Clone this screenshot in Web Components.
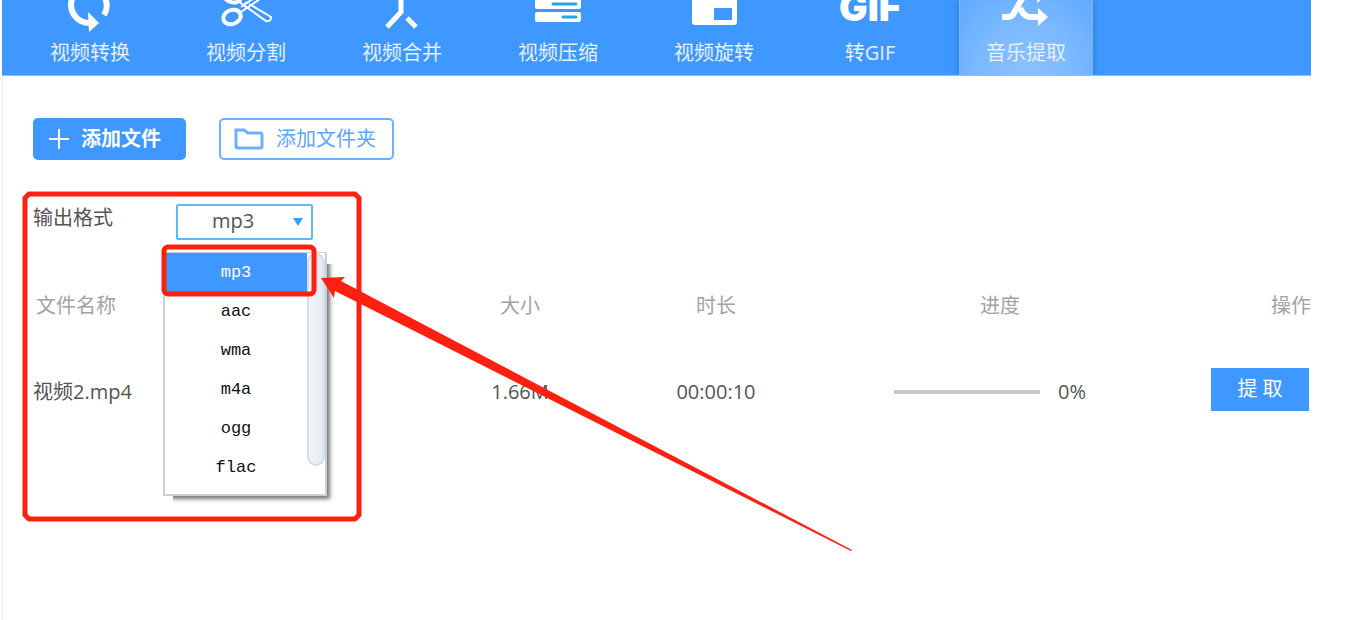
<!DOCTYPE html>
<html lang="zh-CN">
<head>
<meta charset="utf-8">
<meta name="viewport" content="width=device-width, initial-scale=1">
<title>音乐提取</title>
<style>
  body { margin: 0; background: #fff; }
</style>
</head>
<body>
<converter-app></converter-app>

<template id="converter-app">
  <style>
    :host {
      --blue: #3e98ff; --line-blue: #62b9f2; --text: #555; --muted: #a3a3a3; --mark: #ff2012;
      display: block; position: relative; box-sizing: border-box; min-height: 100vh;
      padding: 0 45px 0 2px; overflow: hidden; color: var(--text);
      font: 20px/28px "Open Sans", "Noto Sans CJK SC", sans-serif;
    }
    main {
      box-sizing: border-box; min-height: calc(100vh - 76px);
      padding: 42px 0 0 30px; border-left: 1px solid #ececec;
    }
    .actions { display: flex; gap: 33px; margin-bottom: 44px; }
    file-table { margin-top: 46px; }
  </style>
  <tool-bar>
    <tool-tab>
      <svg slot="icon" viewBox="0 0 64 32" fill="none" stroke="#fff" stroke-width="6">
        <path d="M15-3A18 18 0 0 0 31 23M47-2A18 18 0 0 1 46 15"/>
        <path d="M30 12L41 23L31 32Z" fill="#fff" stroke="none"/>
      </svg>视频转换</tool-tab>
    <tool-tab>
      <svg slot="icon" viewBox="0 0 64 32" fill="none" stroke="#fff">
        <ellipse cx="18" cy="17" rx="9" ry="7" stroke-width="4" transform="rotate(-22 18 17)"/>
        <ellipse cx="18" cy="-4" rx="9" ry="6" stroke-width="4" transform="rotate(22 18 -4)"/>
        <path d="M24 1L52 21Q57 22 57 17L37 5M27 12L46-1M27 7L40-2" stroke-width="2"/>
        <circle cx="33" cy="5" r="3" stroke-width="1"/>
      </svg>视频分割</tool-tab>
    <tool-tab>
      <svg slot="icon" viewBox="0 0 64 32" fill="none" stroke="#fff" stroke-width="5">
        <path d="M31-6V12L17 27M37 18L46 27"/>
      </svg>视频合并</tool-tab>
    <tool-tab>
      <svg slot="icon" viewBox="0 0 64 32" fill="#fff">
        <rect x="9" y="-2" width="46" height="11" rx="2"/><rect x="9" y="12" width="46" height="10" rx="2"/>
        <path d="M27 4H50M37 17H50" stroke="#28a4ec" stroke-width="3" stroke-linecap="round"/>
      </svg>视频压缩</tool-tab>
    <tool-tab>
      <svg slot="icon" viewBox="0 0 64 32" fill="#fff" fill-rule="evenodd">
        <path d="M10-10H55V22Q55 25 52 25H13Q10 25 10 22ZM32 8V20H50V8Z"/>
      </svg>视频旋转</tool-tab>
    <tool-tab>
      <svg slot="icon" viewBox="0 0 64 32" fill="#fff">
        <text x="32" y="21" text-anchor="middle" font-family="Inter, sans-serif" font-weight="900" font-size="38">GIF</text>
      </svg>转GIF</tool-tab>
    <tool-tab active>
      <svg slot="icon" viewBox="0 0 64 32" fill="none" stroke="#fff" stroke-width="6">
        <path d="M8 17H14Q18 17 20 13L29-3M26 8Q30 17 36 17H45"/>
        <path d="M44 8L54 17L44 26ZM43-8V3L51-4Z" fill="#fff" stroke="none"/>
      </svg>音乐提取</tool-tab>
  </tool-bar>
  <main>
    <div class="actions">
      <action-button primary>
        <svg slot="icon" width="20" height="20" viewBox="0 0 20 20" stroke="#fff" stroke-width="2"><path d="M10 0V20M0 10H20"/></svg>添加文件</action-button>
      <action-button>
        <svg slot="icon" width="30" height="22" viewBox="0 0 30 22" fill="none" stroke="#6cb0ff" stroke-width="3"><path d="M3 2H10L14 5H26Q28 5 28 7V18Q28 20 26 20H4Q2 20 2 18V2Z"/></svg>添加文件夹</action-button>
    </div>
    <format-picker></format-picker>
    <file-table></file-table>
  </main>
  <red-marks></red-marks>
</template>

<template id="tool-bar">
  <style>
    :host { display: block; }
    nav {
      display: flex; gap: 22px; box-sizing: border-box; height: 76px; padding-left: 21px;
      background: var(--blue); border-bottom: 1px solid #8bc0ff; overflow: hidden;
    }
  </style>
  <nav><slot></slot></nav>
</template>

<template id="tool-tab">
  <style>
    :host { display: block; flex: 0 0 134px; }
    button {
      display: flex; flex-direction: column; align-items: center; gap: 7px; width: 100%; height: 76px;
      padding: 0; border: 0; background: none; color: #e4f0ff; font: inherit; cursor: pointer;
    }
    :host([active]) button {
      background: radial-gradient(ellipse at 50% 100%, #8bc1ff 0%, #7ab8ff 55%, #58a6ff 110%);
      box-shadow: 0 0 8px #2878cf, inset 1px 0 #78b6ff, inset -1px 0 #78b6ff;
    }
    ::slotted(svg) { display: block; width: 64px; height: 32px; }
  </style>
  <button type="button"><slot name="icon"></slot><span><slot></slot></span></button>
</template>

<template id="action-button">
  <style>
    :host { display: block; }
    button {
      display: flex; align-items: center; gap: 12px; box-sizing: border-box; height: 42px; padding: 0 16px 0 13px;
      border: 2px solid #6cb0ff; border-radius: 5px; background: #fff; color: #5ba7ff; font: inherit; cursor: pointer;
    }
    :host([primary]) button { width: 153px; padding: 0 14px; border-color: var(--blue); background: var(--blue); color: #fff; font-weight: 700; }
    ::slotted(svg) { flex: none; }
  </style>
  <button type="button"><slot name="icon"></slot><span><slot></slot></span></button>
</template>

<template id="format-picker">
  <style>
    :host { display: flex; align-items: flex-start; }
    label { width: 143px; }
    .box { position: relative; width: 137px; }
    select {
      appearance: none; display: block; box-sizing: border-box; width: 100%; height: 36px; padding: 0 34px 2px;
      border: 2px solid var(--line-blue); border-radius: 2px; background: #fff; color: var(--text); font: inherit;
    }
    .arrow { position: absolute; right: 10px; top: 14px; pointer-events: none; }
    .menu {
      position: absolute; z-index: 1; right: -14px; top: 48px; display: flex; box-sizing: border-box; width: 164px; height: 244px;
      border: 2px solid #cbcfda; border-top-width: 1px; background: #fff; box-shadow: 4px 4px 4px -1px #777;
      clip-path: polygon(0 0, 100% 0, 100% 12px, 200% 12px, 200% 200%, 10px 200%, 10px 100%, 0 100%);
    }
    ul { flex: 1; margin: 0; padding: 0; list-style: none; font: 17px/39px "Liberation Mono", monospace; color: #111; text-align: center; }
    [aria-selected=true] { background: var(--blue); color: #fff; }
    .bar { box-sizing: border-box; width: 18px; height: 213px; border: 2px solid #d5dde5; border-radius: 9px; background: linear-gradient(90deg, #f2f5f8, #e3eaf0); }
  </style>
  <label for="format">输出格式</label>
  <div class="box">
    <select id="format"><option>mp3</option><option>aac</option><option>wma</option><option>m4a</option><option>ogg</option><option>flac</option></select>
    <svg class="arrow" width="10" height="8" viewBox="0 0 10 8" fill="#2ba4ea"><path d="M0 0H10L5 8Z"/></svg>
    <div class="menu">
      <ul role="listbox" aria-label="输出格式">
        <li role="option" aria-selected="true">mp3</li>
        <li role="option">aac</li>
        <li role="option">wma</li>
        <li role="option">m4a</li>
        <li role="option">ogg</li>
        <li role="option">flac</li>
      </ul>
      <div class="bar"></div>
    </div>
  </div>
</template>

<template id="file-table">
  <style>
    :host { display: block; }
    table { width: 100%; table-layout: fixed; border-collapse: collapse; }
    th, td { padding: 0; font-weight: 400; text-align: center; }
    th { height: 40px; color: var(--muted); }
    td { height: 126px; box-sizing: border-box; }
    td:not(:last-child) { padding-top: 6px; }
    th:first-child, td:first-child { text-align: left; }
    th:first-child { padding-left: 3px; }
    th:last-child, td:last-child { text-align: right; }
    .size, .time { width: 196px; }
    .state { width: 372px; }
    .act { width: 125px; }
    .progress { display: flex; align-items: center; justify-content: center; gap: 18px; padding-right: 20px; }
    progress { appearance: none; width: 146px; height: 4px; border: 0; background: #c9c9c9; }
    progress::-webkit-progress-bar { background: #c9c9c9; }
    progress::-webkit-progress-value { background: var(--blue); }
    button { width: 98px; height: 43px; margin-right: 2px; padding: 0; border: 0; background: var(--blue); color: #fff; font: inherit; vertical-align: middle; white-space: pre; }
  </style>
  <table>
    <colgroup><col><col class="size"><col class="time"><col class="state"><col class="act"></colgroup>
    <thead><tr><th scope="col">文件名称</th><th scope="col">大小</th><th scope="col">时长</th><th scope="col">进度</th><th scope="col">操作</th></tr></thead>
    <tbody><tr>
      <td>视频2.mp4</td><td>1.66M</td><td>00:00:10</td>
      <td><div class="progress"><progress max="100" value="0" aria-label="进度"></progress><span>0%</span></div></td>
      <td><button type="button">提 取</button></td>
    </tr></tbody>
  </table>
</template>

<template id="red-marks">
  <style>
    :host { position: absolute; z-index: 2; left: 0; top: 0; pointer-events: none; }
    svg { display: block; }
  </style>
  <svg width="860" height="560" viewBox="0 0 860 560" fill="none" stroke="var(--mark)" stroke-width="5" aria-hidden="true">
    <path d="M29 194H355L359 198V515L355 519H29L25 515V198Z" stroke-linejoin="round"/>
    <rect x="164" y="247" width="150" height="47" rx="4"/>
    <path d="M321 278L345 277L341 281L852 550L851 551L335 291L334 298Z" fill="var(--mark)" stroke="none"/>
  </svg>
</template>

<script>
  class TemplateElement extends HTMLElement {
    constructor() {
      super();
      const template = document.getElementById(this.localName);
      this.attachShadow({ mode: "open" }).append(template.content.cloneNode(true));
    }
  }
  class ToolBar extends TemplateElement {}
  class ToolTab extends TemplateElement {}
  class ActionButton extends TemplateElement {}
  class FileTable extends TemplateElement {}
  class RedMarks extends TemplateElement {}
  class ConverterApp extends TemplateElement {}
  class FormatPicker extends TemplateElement {
    connectedCallback() {
      const select = this.shadowRoot.querySelector("select");
      const items = [...this.shadowRoot.querySelectorAll("li")];
      const mark = () => items.forEach(li => li.setAttribute("aria-selected", li.textContent === select.value));
      items.forEach(li => li.addEventListener("click", () => { select.value = li.textContent; mark(); }));
      select.addEventListener("change", mark);
      mark();
    }
  }
  customElements.define("tool-bar", ToolBar);
  customElements.define("tool-tab", ToolTab);
  customElements.define("action-button", ActionButton);
  customElements.define("format-picker", FormatPicker);
  customElements.define("file-table", FileTable);
  customElements.define("red-marks", RedMarks);
  customElements.define("converter-app", ConverterApp);
</script>
</body>
</html>
